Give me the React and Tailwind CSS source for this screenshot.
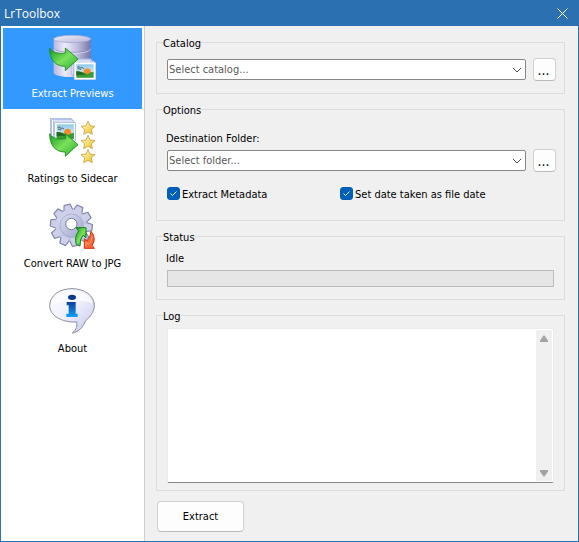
import { useState } from "react";

function GreenArrow() {
  return (
    <path
      d="M149 144 C155 156 173 163 196 159 V144 L234 177 L196 212 V199 C168 200 148 179 149 144 Z"
      fill="url(#green)"
      stroke="#178a1b"
      strokeWidth="2.5"
      strokeLinejoin="round"
    />
  );
}

function Picture() {
  return (
    <g>
      <rect x="0" y="0" width="54" height="46" fill="url(#sky)" />
      <path d="M3 10 q7 -5 10 3 q6 -4 10 2 M4 15 q6 0 10 3" fill="none" stroke="#3b5568" strokeWidth="3" />
      <circle cx="34" cy="25" r="11" fill="#f98a2c" />
      <path d="M0 24 Q18 22 34 34 Q44 26 54 26 V46 H0 Z" fill="#3c9c35" />
      <path d="M0 24 Q16 24 30 38 Q18 34 0 38 Z" fill="#1f6a24" />
    </g>
  );
}

function Gradients() {
  return (
    <svg width="0" height="0" className="absolute" aria-hidden="true">
      <defs>
        <linearGradient id="green" x1="0" y1="0" x2="1" y2="1">
          <stop offset="0" stopColor="#159a1c" />
          <stop offset="0.5" stopColor="#7be05c" />
          <stop offset="1" stopColor="#22ab2a" />
        </linearGradient>
        <linearGradient id="sky" x1="0" y1="0" x2="0" y2="1">
          <stop offset="0" stopColor="#8fcbe8" />
          <stop offset="1" stopColor="#f2faf6" />
        </linearGradient>
        <linearGradient id="metal">
          <stop offset="0" stopColor="#b9b7dc" />
          <stop offset="0.3" stopColor="#edecfb" />
          <stop offset="0.65" stopColor="#bdbce0" />
          <stop offset="1" stopColor="#7775a5" />
        </linearGradient>
        <linearGradient id="lid" x1="0" y1="0" x2="1" y2="1">
          <stop offset="0" stopColor="#f3f2fc" />
          <stop offset="1" stopColor="#b3b1d6" />
        </linearGradient>
        <linearGradient id="gold" x1="0" y1="0" x2="1" y2="1">
          <stop offset="0.2" stopColor="#fff6b4" />
          <stop offset="0.8" stopColor="#f4c832" />
        </linearGradient>
        <linearGradient id="gear" x1="0" y1="0" x2="1" y2="1">
          <stop offset="0" stopColor="#e2e4f3" />
          <stop offset="0.5" stopColor="#c0c4e0" />
          <stop offset="1" stopColor="#9599c0" />
        </linearGradient>
        <linearGradient id="bubble" x1="0" y1="0" x2="1" y2="1">
          <stop offset="0" stopColor="#ffffff" />
          <stop offset="0.5" stopColor="#eeeefc" />
          <stop offset="1" stopColor="#c3c3ee" />
        </linearGradient>
        <linearGradient id="info" x1="0" y1="0" x2="0" y2="1">
          <stop offset="0" stopColor="#0b3f9c" />
          <stop offset="1" stopColor="#15a0f5" />
        </linearGradient>
      </defs>
    </svg>
  );
}

function PreviewsIcon() {
  return (
    <svg viewBox="147 99 141 144" className="h-12 w-[47px]" aria-hidden="true">
      <path d="M161 117 V218 Q164 230 216 231 Q269 230 272 218 V117 Z" fill="url(#metal)" />
      <path d="M161 145 Q170 157 216 157 Q264 157 272 145 M161 181 Q170 193 216 193 Q264 193 272 181" fill="none" stroke="#8987b8" strokeWidth="2" />
      <path d="M161 148 Q170 160 216 160 Q264 160 272 148" fill="none" stroke="#e4e3f5" strokeWidth="2" />
      <ellipse cx="216.500" cy="117" rx="55.500" ry="11" fill="url(#lid)" stroke="#a3a1cc" strokeWidth="2" />
      <path d="M216 176 H273 V225 H216 Z M220 179 H277 V229 H220 Z M222 183 H282 V234 H222 Z" fill="#f4f7fd" stroke="#8899cb" strokeWidth="1.500" />
      <rect x="223" y="187" width="64" height="52" fill="#fff" stroke="#c9d2ea" strokeWidth="1.500" />
      <g transform="translate(229 193) scale(0.960 0.870)">
        <Picture />
      </g>
      <GreenArrow />
    </svg>
  );
}

const STAR = "M0 -21 L6 -7 L21 -5 L10 4 L13 19 L0 12 L-13 19 L-10 4 L-21 -5 L-6 -7 Z";

function RatingsIcon() {
  return (
    <svg viewBox="147 24 141 144" className="h-12 w-[47px]" aria-hidden="true">
      <g fill="#fff" stroke="#8ca6da" strokeWidth="2">
        <rect x="151" y="25" width="62" height="52" />
        <rect x="155" y="29" width="62" height="52" />
        <rect x="160" y="33" width="62" height="52" />
        <rect x="164" y="38" width="63" height="52" />
      </g>
      <g transform="translate(170 43) scale(0.960)">
        <Picture />
      </g>
      <g transform="translate(0 -73)">
        <GreenArrow />
      </g>
      <g fill="url(#gold)" stroke="#c9a04a" strokeWidth="2.500" strokeLinejoin="round">
        <path d={STAR} transform="translate(264 54)" />
        <path d={STAR} transform="translate(264 97)" />
        <path d={STAR} transform="translate(264 139)" />
      </g>
    </svg>
  );
}

const TOOTH_ANGLES = [0, 36, 72, 108, 144, 180, 216, 252, 288, 324];

function ConvertIcon() {
  return (
    <svg viewBox="147 39 141 144" className="h-12 w-[47px]" aria-hidden="true">
      <g fill="#b4b8d6" stroke="#7c80aa" strokeWidth="3" strokeLinejoin="round">
        {TOOTH_ANGLES.map((angle) => (
          <path key={angle} d="M200 64 L205 43 H224 L229 64 Z" transform={`rotate(${angle - 12} 214 106)`} />
        ))}
      </g>
      <circle cx="214" cy="106" r="49" fill="url(#gear)" stroke="#8f93ba" strokeWidth="2" />
      <g fill="#cdd0e8">
        {TOOTH_ANGLES.map((angle) => (
          <path key={angle} d="M202 68 L207 46 H222 L227 68 Z" transform={`rotate(${angle - 12} 214 106)`} />
        ))}
      </g>
      <circle cx="214" cy="106" r="34" fill="none" stroke="#adb1d2" strokeWidth="3" />
      <circle cx="214" cy="102" r="17" fill="#fff" stroke="#777ba7" strokeWidth="3" />
      <path
        d="M228 113 H258 V143 L249 136 Q239 147 240 168 L229 163 Q222 141 236 123 Z"
        fill="url(#green)"
        stroke="#118019"
        strokeWidth="3"
        strokeLinejoin="round"
      />
      <path
        d="M273 124 Q291 146 276 166 L283 175 H253 V146 L261 153 Q271 144 273 124 Z"
        fill="#fa6536"
        stroke="#cc3214"
        strokeWidth="3"
        strokeLinejoin="round"
      />
      <path d="M276 139 Q277 153 266 163 L258 157 V169" fill="none" stroke="#ffa477" strokeWidth="3" />
    </svg>
  );
}

function AboutIcon() {
  return (
    <svg viewBox="147 39 141 144" className="h-12 w-[47px]" aria-hidden="true">
      <path
        d="M216 41 C254 41 283 62 283 91 C283 112 269 127 257 137 C248 158 237 170 217 174 C230 163 232 153 230 141 C184 143 149 121 149 92 C149 62 178 41 216 41 Z"
        fill="url(#bubble)"
        stroke="#8b8b9c"
        strokeWidth="3"
      />
      <path d="M154 91 C154 65 181 47 216 47 C250 47 277 65 277 87 C252 72 184 76 154 91 Z" fill="#fff" opacity="0.600" />
      <ellipse cx="216" cy="67" rx="12" ry="8" fill="#0b3b91" />
      <path d="M200 81 H227 V116 H233 V126 H199 V116 H206 V91 H200 Z" fill="url(#info)" />
    </svg>
  );
}

const PAGES = [
  { name: "Extract Previews", Icon: PreviewsIcon },
  { name: "Ratings to Sidecar", Icon: RatingsIcon },
  { name: "Convert RAW to JPG", Icon: ConvertIcon },
  { name: "About", Icon: AboutIcon },
];

function Group({ title, className, children }) {
  return (
    <fieldset className={`flex min-w-0 flex-col border border-[#dcdcdc] pr-2 pl-2.5 ${className}`}>
      <legend className="-ml-1 pt-0.5 leading-[11px]">{title}</legend>
      {children}
    </fieldset>
  );
}

function FolderPicker({ id, label, placeholder }) {
  return (
    <div className="flex items-center gap-[7px]">
      <div className="relative min-w-0 flex-1">
        <select
          id={id}
          aria-label={label}
          className="block h-[21px] w-full appearance-none rounded-xs border border-[#868686] bg-white px-px leading-4 text-[#5a5a5a]"
        >
          <option>{placeholder}</option>
        </select>
        <svg viewBox="0 0 10 6" className="pointer-events-none absolute top-[9px] right-1 h-1.5 w-2.5" fill="none" stroke="#505050" aria-hidden="true">
          <path d="M1 0 L5 4 L9 0" />
        </svg>
      </div>
      <button
        type="button"
        aria-label="Browse"
        className="size-[23px] rounded-sm border border-[#d0d0d0] border-b-[#bababa] bg-[#fdfdfd] pr-0.5 text-sm leading-5 text-black"
      >
        ...
      </button>
    </div>
  );
}

function Check({ label, className }) {
  return (
    <label className={`flex items-center gap-0.5 ${className}`}>
      <span className="relative block size-[13px]">
        <input type="checkbox" defaultChecked className="peer block size-[13px] appearance-none rounded-[3px] border border-[#868686] bg-white checked:border-[#005fb8] checked:bg-[#005fb8]" />
        <svg viewBox="0 0 13 13" className="pointer-events-none absolute inset-0 hidden size-[13px] peer-checked:block" fill="none" stroke="#e4effa" aria-hidden="true">
          <path d="M3.500 6.500 L5.500 8.500 L9.500 4.500" />
        </svg>
      </span>
      <span className="pt-0.5 leading-[11px]">{label}</span>
    </label>
  );
}

export default function App() {
  const [active, setActive] = useState("Extract Previews");
  return (
    <div className="flex h-screen flex-col overflow-hidden border border-t-0 border-[#2b70b0] bg-[#f0f0f0] font-['DejaVu_Sans_Condensed','DejaVu_Sans',sans-serif] text-[11px] text-black">
      <Gradients />
      <header className="flex h-[26px] shrink-0 items-center justify-between bg-[#2b70b0] pr-2.5 pl-[3px] text-white">
        <h1 className="pt-px font-['Open_Sans',sans-serif] text-xs">LrToolbox</h1>
        <button type="button" aria-label="Close" className="size-[11px]">
          <svg viewBox="0 0 11 11" className="size-[11px]" stroke="#fff" aria-hidden="true">
            <path d="M0.500 0.500 L10.500 10.500 M10.500 0.500 L0.500 10.500" />
          </svg>
        </button>
      </header>

      <div className="flex min-h-0 flex-1">
        <nav className="flex w-36 shrink-0 flex-col gap-1 border-r border-[#cfcfcf] bg-white p-0.5">
          {PAGES.map(({ name, Icon }) => (
            <button
              key={name}
              type="button"
              onClick={() => setActive(name)}
              className={`flex h-[81px] flex-col items-center pt-[5px] ${active === name ? "bg-[#3399ff] text-white" : "text-black"}`}
            >
              <Icon />
              <span className="mt-[5px] leading-4">{name}</span>
            </button>
          ))}
        </nav>

        <main className="flex min-w-0 flex-1 flex-col gap-[9px] pt-2.5 pr-[13px] pb-[9px] pl-[11px]">
          <Group title="Catalog" className="pt-[9px] pb-3">
            <FolderPicker id="catalog" label="Catalog" placeholder="Select catalog..." />
          </Group>

          <Group title="Options" className="pt-4 pb-5">
            <label htmlFor="destination" className="-ml-px mb-[3px] leading-[14px]">
              Destination Folder:
            </label>
            <FolderPicker id="destination" placeholder="Select folder..." />
            <div className="mt-[15px] flex">
              <Check label="Extract Metadata" className="w-[173px]" />
              <Check label="Set date taken as file date" className="flex-1" />
            </div>
          </Group>

          <Group title="Status" className="pt-[9px] pb-3">
            <span className="-ml-px leading-[14px]">Idle</span>
            <div role="progressbar" aria-label="Progress" aria-valuenow={0} className="mt-1 mr-0.5 h-[17px] border border-[#bcbcbc] bg-[#e6e6e6]" />
          </Group>

          <Group title="Log" className="flex-1 pt-1.5 pb-[7px]">
            <div className="mr-0.5 flex h-full rounded-xs border border-[#ebebeb] border-b-[#868686] bg-white p-px">
              <textarea readOnly aria-label="Log" className="block min-w-0 flex-1 resize-none outline-none" />
              <div className="flex w-4 flex-col items-center justify-between bg-[#f0f0f0] pt-[5px] pb-1">
                <button type="button" aria-label="Scroll up">
                  <svg viewBox="0 0 8 7" className="block h-[7px] w-2" fill="#a3a3a3" aria-hidden="true">
                    <path d="M3.500 0.500 H4.500 L8 5.500 V7 H0 V5.500 Z" />
                  </svg>
                </button>
                <button type="button" aria-label="Scroll down">
                  <svg viewBox="0 0 8 7" className="block h-[7px] w-2" fill="#a3a3a3" aria-hidden="true">
                    <path d="M3.500 6.500 H4.500 L8 1.500 V0 H0 V1.500 Z" />
                  </svg>
                </button>
              </div>
            </div>
          </Group>

          <button type="button" className="mt-px ml-px h-[31px] w-[87px] rounded-sm border border-[#d0d0d0] border-b-[#bababa] bg-[#fdfdfd] pt-0.5 text-black">
            Extract
          </button>
        </main>
      </div>
    </div>
  );
}
